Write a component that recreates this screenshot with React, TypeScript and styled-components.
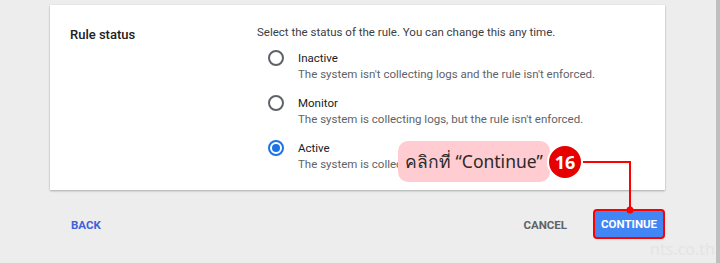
import React, { useState } from 'react'
import styled, { createGlobalStyle } from 'styled-components'

const GlobalStyle = createGlobalStyle`
  html, body {
    margin: 0;
    padding: 0;
    background: #ededed;
    font-family: Roboto, 'Liberation Sans', sans-serif;
  }
`

const Page = styled.div`
  position: relative;
  display: flex;
  width: 720px;
  height: 263px;
  overflow: hidden;
  background: #ededed;
`

const Main = styled.div`
  flex: 1;
  padding: 5px 51px 0 50px;
`

const Scrollbar = styled.div`
  width: 4px;
  background: #bfbfbf;
`

const Card = styled.div`
  display: grid;
  grid-template-columns: 187px 1fr;
  height: 185px;
  box-sizing: border-box;
  padding: 19px 20px 0 20px;
  background: #fff;
  box-shadow: 0 1px 2px rgba(0, 0, 0, 0.28), 0 0 1px rgba(0, 0, 0, 0.08);
`

const SectionTitle = styled.div`
  margin-top: 2px;
  font-size: 13px;
  line-height: 18px;
  font-weight: 500;
  color: #202124;
`

const Intro = styled.div`
  font-size: 11.5px;
  line-height: 16px;
  color: #3c4043;
`

const OptionList = styled.div`
  display: flex;
  flex-direction: column;
  gap: 13px;
  margin-top: 10px;
  padding-left: 11px;
`

const Option = styled.label`
  display: flex;
  gap: 14px;
  cursor: pointer;
`

const Radio = styled.span<{ $checked: boolean }>`
  position: relative;
  flex: none;
  width: 16px;
  height: 16px;
  box-sizing: border-box;
  border-radius: 50%;
  border: 2px solid ${p => (p.$checked ? '#1a73e8' : '#5f6368')};

  &::after {
    content: '';
    display: ${p => (p.$checked ? 'block' : 'none')};
    position: absolute;
    left: 2px;
    top: 2px;
    width: 8px;
    height: 8px;
    border-radius: 50%;
    background: #1a73e8;
  }
`

const OptionText = styled.div`
  font-size: 11.5px;
  line-height: 16px;

  .label {
    color: #202124;
  }

  .description {
    color: #5f6368;
  }
`

const Footer = styled.div`
  display: flex;
  align-items: center;
  justify-content: space-between;
  padding: 18px 0 0 13px;
`

const Actions = styled.div`
  display: flex;
  align-items: center;
  gap: 18px;
`

const TextButton = styled.button<{ $color: string }>`
  height: 30px;
  padding: 2px 8px 0;
  border: none;
  background: transparent;
  font-family: Roboto, 'Liberation Sans', sans-serif;
  font-size: 11.5px;
  font-weight: 700;
  color: ${p => p.$color};
  cursor: pointer;
`

const PrimaryButton = styled.button`
  width: 72px;
  height: 30px;
  margin-top: 1px;
  box-sizing: border-box;
  border: 2px solid #f00;
  border-radius: 4px;
  background: #4285f4;
  font-family: Roboto, 'Liberation Sans', sans-serif;
  font-size: 11.5px;
  font-weight: 700;
  color: #fff;
  cursor: pointer;
`

const Callout = styled.div`
  position: absolute;
  left: 398px;
  top: 141px;
  width: 152px;
  height: 41px;
  box-sizing: border-box;
  padding-left: 7px;
  display: flex;
  align-items: center;
  border-radius: 10px;
  background: #ffccd1;
  font-family: 'Noto Sans', 'DejaVu Sans', sans-serif;
  font-size: 17.5px;
  color: #2a2a2a;
  white-space: nowrap;
`

const StepBadge = styled.div`
  position: absolute;
  left: 547px;
  top: 144px;
  width: 36px;
  height: 36px;
  box-sizing: border-box;
  border: 2px solid #fff;
  border-radius: 50%;
  background: #e60000;
  display: flex;
  align-items: center;
  justify-content: center;
  font-family: 'Noto Sans', 'DejaVu Sans', sans-serif;
  font-size: 18px;
  font-weight: 700;
  color: #fff;
`

const Connector = styled.svg`
  position: absolute;
  left: 580px;
  top: 155px;
`

const Watermark = styled.div`
  position: absolute;
  right: 5px;
  bottom: 3px;
  font-family: 'Noto Sans', sans-serif;
  font-size: 16px;
  color: #e4e4e4;
`

const options = [
  { id: 'inactive', label: 'Inactive', description: "The system isn't collecting logs and the rule isn't enforced." },
  { id: 'monitor', label: 'Monitor', description: "The system is collecting logs, but the rule isn't enforced." },
  { id: 'active', label: 'Active', description: 'The system is collecting logs and the rule is enforced.' },
]

export default function App() {
  const [status, setStatus] = useState('active')

  return (
    <Page>
      <GlobalStyle />
      <Main>
        <Card>
          <SectionTitle>Rule status</SectionTitle>
          <div>
            <Intro>Select the status of the rule. You can change this any time.</Intro>
            <OptionList>
              {options.map(o => (
                <Option key={o.id} onClick={() => setStatus(o.id)}>
                  <Radio $checked={status === o.id} />
                  <OptionText>
                    <div className="label">{o.label}</div>
                    <div className="description">{o.description}</div>
                  </OptionText>
                </Option>
              ))}
            </OptionList>
          </div>
        </Card>
        <Footer>
          <TextButton $color="#3f62d9">BACK</TextButton>
          <Actions>
            <TextButton $color="#5f6368">CANCEL</TextButton>
            <PrimaryButton>CONTINUE</PrimaryButton>
          </Actions>
        </Footer>
      </Main>
      <Scrollbar />

      <Callout>คลิกที่ “Continue”</Callout>
      <Connector width="60" height="62" viewBox="0 0 60 62">
        <polyline points="3,7 50,7 50,55" fill="none" stroke="#f00" strokeWidth="2" />
        <circle cx="50" cy="55" r="3.5" fill="#f00" />
      </Connector>
      <StepBadge>16</StepBadge>
      <Watermark>nts.co.th</Watermark>
    </Page>
  )
}
